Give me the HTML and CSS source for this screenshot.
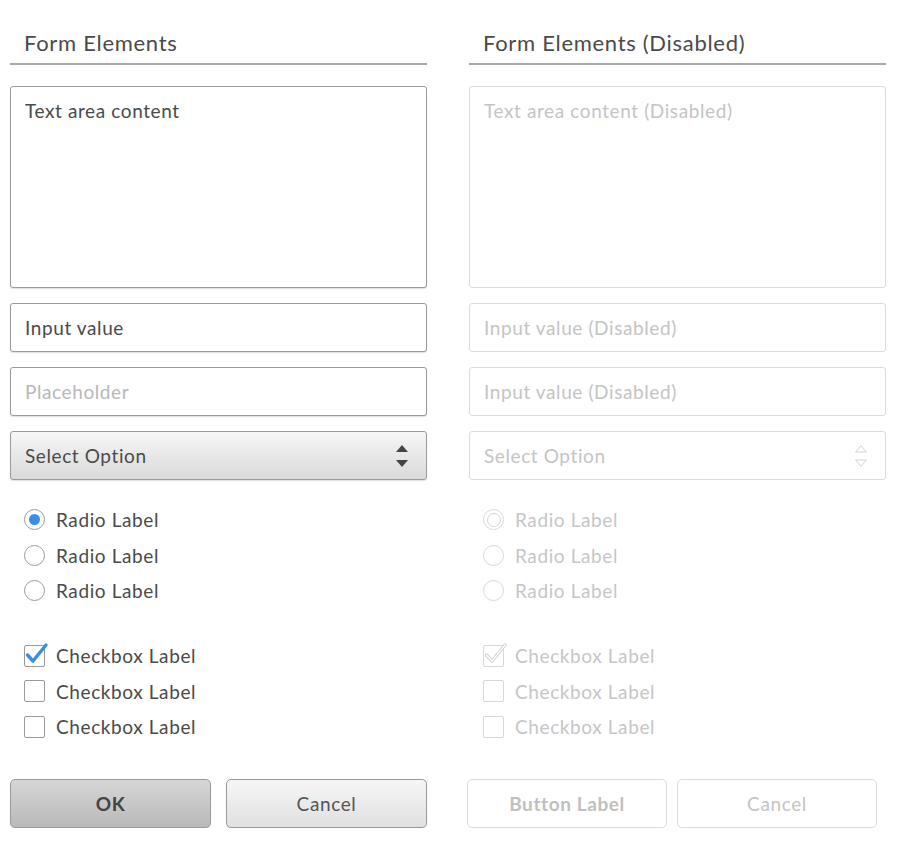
FILE: index.html
```html
<!DOCTYPE html>
<html lang="en">
<head>
<meta charset="utf-8">
<title>Form Elements</title>
<link rel="stylesheet" href="styles.css">
</head>
<body>
<main class="page">
  <section class="col">
    <h2 class="title">Form Elements</h2>
    <div class="field area">Text area content</div>
    <div class="field input">Input value</div>
    <div class="field input placeholder">Placeholder</div>
    <div class="field select">
      <span>Select Option</span>
      <svg class="arrows" width="14" height="24" viewBox="0 0 14 24"><path d="M1 8 L7 1 L13 8 Z M1 16 L13 16 L7 23 Z" fill="#444"/></svg>
    </div>

    <div class="group radios">
      <div class="opt"><span class="radio on"></span><span>Radio Label</span></div>
      <div class="opt"><span class="radio"></span><span>Radio Label</span></div>
      <div class="opt"><span class="radio"></span><span>Radio Label</span></div>
    </div>
    <div class="group checks">
      <div class="opt"><span class="check on"><svg class="tick" width="26" height="26" viewBox="0 0 26 26"><path d="M4.5 13 L10 19 L23 3" fill="none" stroke="#3a8ee6" stroke-width="3.4" stroke-linecap="round" stroke-linejoin="round"/></svg></span><span>Checkbox Label</span></div>
      <div class="opt"><span class="check"></span><span>Checkbox Label</span></div>
      <div class="opt"><span class="check"></span><span>Checkbox Label</span></div>
    </div>

    <div class="buttons">
      <button class="btn primary">OK</button>
      <button class="btn">Cancel</button>
    </div>
  </section>

  <section class="col disabled">
    <h2 class="title">Form Elements (Disabled)</h2>
    <div class="field area">Text area content (Disabled)</div>
    <div class="field input">Input value (Disabled)</div>
    <div class="field input">Input value (Disabled)</div>
    <div class="field select">
      <span>Select Option</span>
      <svg class="arrows" width="14" height="24" viewBox="0 0 14 24"><path d="M1.5 8 L7 1.8 L12.5 8 Z M1.5 16 L12.5 16 L7 22.2 Z" fill="none" stroke="#d4d4d4" stroke-width="1"/></svg>
    </div>

    <div class="group radios">
      <div class="opt"><span class="radio on"></span><span>Radio Label</span></div>
      <div class="opt"><span class="radio"></span><span>Radio Label</span></div>
      <div class="opt"><span class="radio"></span><span>Radio Label</span></div>
    </div>
    <div class="group checks">
      <div class="opt"><span class="check on"><svg class="tick" width="26" height="26" viewBox="0 0 26 26"><path d="M4.5 13 L10 19 L23 3" fill="none" stroke="#d0d0d0" stroke-width="3.4" stroke-linecap="round" stroke-linejoin="round"/><path d="M4.5 13 L10 19 L23 3" fill="none" stroke="#ffffff" stroke-width="1.4" stroke-linecap="round" stroke-linejoin="round"/></svg></span><span>Checkbox Label</span></div>
      <div class="opt"><span class="check"></span><span>Checkbox Label</span></div>
      <div class="opt"><span class="check"></span><span>Checkbox Label</span></div>
    </div>

    <div class="buttons">
      <button class="btn primary" disabled>Button Label</button>
      <button class="btn" disabled>Cancel</button>
    </div>
  </section>
</main>
</body>
</html>
```

FILE: styles.css
```css
* { box-sizing: border-box; }

html, body {
  margin: 0;
  padding: 0;
  background: #ffffff;
}

body {
  font-family: "Lato", "Open Sans", sans-serif;
  color: #4a4a4a;
  font-size: 19px;
  letter-spacing: 0.6px;
}

.page {
  display: flex;
  gap: 42px;
  padding: 31px 18px 0 10px;
}

.col {
  width: 417px;
  display: flex;
  flex-direction: column;
}

.title {
  margin: 0;
  font-size: 22px;
  font-weight: 400;
  line-height: 24px;
  letter-spacing: 0.7px;
  padding: 0 0 8px 14px;
  border-bottom: 2px solid #a9a9a9;
  color: #4a4a4a;
}

.field {
  border: 1px solid #9a9a9a;
  border-radius: 3px;
  box-shadow: 0 1px 1px rgba(0,0,0,0.12);
  padding: 0 14px;
  font-size: 19px;
  color: #4a4a4a;
  background: #fff;
}

.area {
  margin-top: 21px;
  height: 202px;
  padding-top: 12px;
  line-height: 24px;
}

.input, .select {
  margin-top: 15px;
  height: 49px;
  display: flex;
  align-items: center;
}

.placeholder { color: #b8b8b8; }

.select {
  position: relative;
  background: linear-gradient(#f6f6f6, #dadada);
  justify-content: space-between;
}

.arrows {
  position: absolute;
  right: 17px;
  top: 12px;
}

.group {
  display: flex;
  flex-direction: column;
}

.radios { margin-top: 22px; }
.checks { margin-top: 29.5px; }

.opt {
  height: 35.5px;
  display: flex;
  align-items: center;
  gap: 11px;
  padding-left: 14px;
  font-size: 19px;
}

.radio {
  width: 21px;
  height: 21px;
  border-radius: 50%;
  border: 1.5px solid #9a9a9a;
  background: #fff;
  position: relative;
  flex: none;
}

.radio.on::after {
  content: "";
  position: absolute;
  left: 3.5px;
  top: 3.5px;
  width: 11px;
  height: 11px;
  border-radius: 50%;
  background: #3a8ee6;
}

.check {
  width: 21px;
  height: 22px;
  border: 1.5px solid #9a9a9a;
  border-radius: 2px;
  background: #fff;
  position: relative;
  flex: none;
}

.tick {
  position: absolute;
  left: -2px;
  top: -4px;
}

.buttons {
  display: flex;
  gap: 15px;
  margin-top: 34px;
}

.btn {
  width: 201px;
  height: 49px;
  border: 1px solid #9a9a9a;
  border-radius: 5px;
  font-family: inherit;
  font-size: 19px;
  letter-spacing: 0.6px;
  color: #555;
  background: linear-gradient(#f6f6f6, #e0e0e0);
  box-shadow: 0 1px 1px rgba(0,0,0,0.12);
  padding: 0;
}

.btn.primary {
  font-weight: 700;
  color: #444;
  background: linear-gradient(#d6d6d6, #b9b9b9);
}

/* Disabled column */
.disabled .field {
  border-color: #dcdcdc;
  color: #c4c4c4;
  box-shadow: none;
  background: #fff;
}

.disabled .opt { color: #c6c6c6; }

.disabled .radio,
.disabled .check {
  border-color: #d8d8d8;
}

.disabled .radio.on::after {
  background: #fff;
  border: 1.5px solid #d4d4d4;
  left: 3px;
  top: 3px;
  width: 12px;
  height: 12px;
}

.disabled .buttons {
  gap: 10px;
  margin-left: -2px;
}

.disabled .btn {
  width: 200px;
  border-color: #dcdcdc;
  background: #fff;
  color: #c4c4c4;
  box-shadow: none;
}

.disabled .btn.primary {
  color: #c0c0c0;
}
```
